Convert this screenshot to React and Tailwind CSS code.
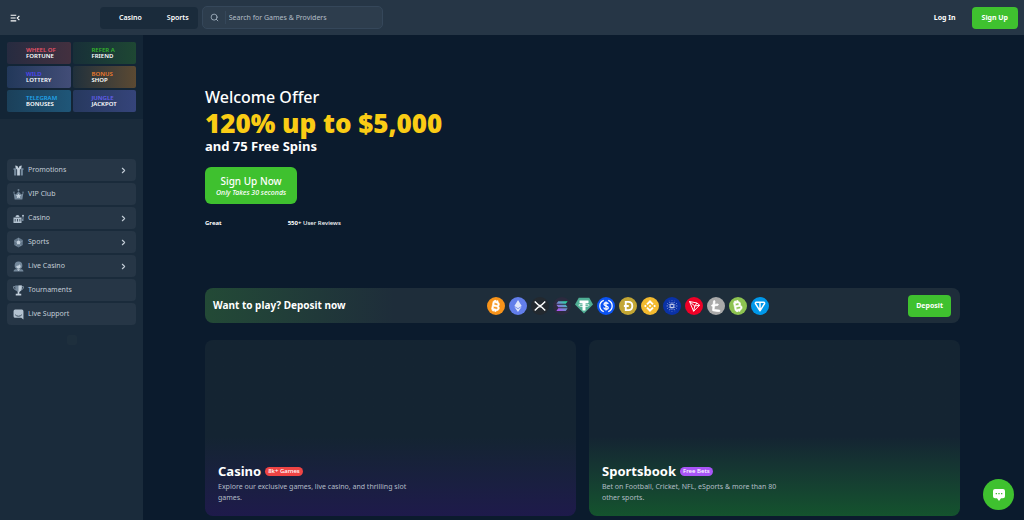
import { FaBitcoinSign, FaLitecoinSign } from 'react-icons/fa6'
import { SiBinance, SiCardano, SiEthereum } from 'react-icons/si'
import { ChevronRight, Search } from 'lucide-react'

const promos = [
  { top: 'WHEEL OF', bottom: 'FORTUNE', color: 'text-[#ee5468]', bg: 'from-[#262b40] to-[#43303f]' },
  { top: 'REFER A', bottom: 'FRIEND', color: 'text-[#35b52c]', bg: 'from-[#182f38] to-[#1e4733]' },
  { top: 'WILD', bottom: 'LOTTERY', color: 'text-[#4f46f5]', bg: 'from-[#22385a] to-[#424d77]' },
  { top: 'BONUS', bottom: 'SHOP', color: 'text-[#ee7b2c]', bg: 'from-[#20303b] to-[#5b4932]' },
  { top: 'TELEGRAM', bottom: 'BONUSES', color: 'text-[#21a5ea]', bg: 'from-[#1b405a] to-[#1f5678]' },
  { top: 'JUNGLE', bottom: 'JACKPOT', color: 'text-[#6660f0]', bg: 'from-[#27395f] to-[#35447a]' }
]

const menu = [
  { label: 'Promotions', icon: GiftIcon, expandable: true },
  { label: 'VIP Club', icon: CrownIcon },
  { label: 'Casino', icon: SlotIcon, expandable: true },
  { label: 'Sports', icon: BallIcon, expandable: true },
  { label: 'Live Casino', icon: DealerIcon, expandable: true },
  { label: 'Tournaments', icon: TrophyIcon },
  { label: 'Live Support', icon: SupportIcon }
]

const coins = [
  { name: 'Bitcoin', bg: 'bg-[#f7931a]', icon: <FaBitcoinSign className="size-3 rotate-12 stroke-current stroke-[24]" /> },
  { name: 'Ethereum', bg: 'bg-[#627eea]', icon: <SiEthereum className="size-3 opacity-80" /> },
  { name: 'XRP', bg: 'bg-[#23292f]', icon: <XrpIcon /> },
  { name: 'Solana', bg: 'bg-[#2b2a3e]', icon: <SolanaIcon /> },
  { name: 'Tether', bg: '', icon: <TetherIcon /> },
  { name: 'USD Coin', bg: 'bg-[#0b53f4]', icon: <UsdcIcon /> },
  { name: 'Dogecoin', bg: 'bg-[#c3a634]', icon: <DogeIcon /> },
  { name: 'BNB', bg: 'bg-[#f3ba2f]', icon: <SiBinance className="size-3" /> },
  { name: 'Cardano', bg: 'bg-[#0a32a8]', icon: <SiCardano className="size-3" /> },
  { name: 'Tron', bg: 'bg-[#ef0027]', icon: <TronIcon /> },
  { name: 'Litecoin', bg: 'bg-[#a9a9a9]', icon: <FaLitecoinSign className="size-3 rotate-6 stroke-current stroke-[32]" /> },
  { name: 'Bitcoin Cash', bg: 'bg-[#8dc351]', icon: <FaBitcoinSign className="size-3 -rotate-12 stroke-current stroke-[24]" /> },
  { name: 'Toncoin', bg: 'bg-[#0098ea]', icon: <TonIcon /> }
]

const games = [
  {
    title: 'Casino',
    badge: '8k+ Games',
    badgeBg: 'bg-[#ef4444]',
    text: 'Explore our exclusive games, live casino, and thrilling slot games.',
    bg: 'from-[#142432] via-[#142432] to-[#1e1a4b]'
  },
  {
    title: 'Sportsbook',
    badge: 'Free Bets',
    badgeBg: 'bg-[#a855f7]',
    text: 'Bet on Football, Cricket, NFL, eSports & more than 80 other sports.',
    bg: 'from-[#142432] via-[#142432] to-[#14532d]'
  }
]

function MenuIcon() {
  return (
    <svg viewBox="0 0 16 12" className="h-2 w-2.5" fill="none" stroke="currentColor" strokeWidth="1.8">
      <path d="M1 1.5h9M1 6h8M1 10.5h9M15 2.5 11.5 6 15 9.5" />
    </svg>
  )
}

function GiftIcon() {
  return (
    <svg viewBox="0 0 20 20" className="size-[11px]" fill="#74889b">
      <path d="M1 6h5v13H3a1 1 0 0 1-1-1V9H1zM14 6h5v3h-1v9a1 1 0 0 1-1 1h-3z" />
      <path d="M7.5 8h5v11h-5zM4 1l4 1 2 4 2-4 4-1-1 5-3 3H8L5 6z" fill="#c3d0dc" />
    </svg>
  )
}

function CrownIcon() {
  return (
    <svg viewBox="0 0 20 20" className="size-[11px]" fill="#74889b">
      <path d="m1 7 4 3 5-6 5 6 4-3-2 12H3z" />
      <circle cx="10" cy="2" r="1.8" />
      <circle cx="1.8" cy="6" r="1.3" />
      <circle cx="18.2" cy="6" r="1.3" />
      <path d="m10 8 1.5 3 3.3.4-2.4 2.3.6 3.3-3-1.5L7 17l.6-3.3-2.4-2.3 3.3-.4z" fill="#c3d0dc" />
    </svg>
  )
}

function SlotIcon() {
  return (
    <svg viewBox="0 0 22 20" className="size-[11px]" fill="#b3c2d0">
      <path d="M5 7a4 4 0 0 1 8 0z" />
      <path d="M1 8h16v11H1zm2.5 3v5H5v-5zm4.7 0v5h1.6v-5zm4.8 0v5h1.5v-5z" fillRule="evenodd" />
      <path d="M18 11h1V6h2v9h-3z" fill="#74889b" />
      <circle cx="20" cy="4.5" r="2" />
    </svg>
  )
}

function BallIcon() {
  return (
    <svg viewBox="0 0 20 20" className="size-[11px]" fill="#64788b">
      <path d="m10 1 7.8 4.5v9L10 19l-7.8-4.5v-9z" />
      <path d="m10 6 3.8 2.8-1.4 4.4H7.6L6.2 8.8z" fill="#c3d0dc" />
      <path d="M10 6V2M14 9l3.5-1.5M12.5 13l2 3.5M7.5 13l-2 3.5M6 9 2.5 7.5" stroke="#91a3b4" />
    </svg>
  )
}

function DealerIcon() {
  return (
    <svg viewBox="0 0 20 20" className="size-[11px]" fill="#74889b">
      <path d="M3 8a7 7 0 0 1 14 0c0 3-1 5-3 6H6c-2-1-3-3-3-6M1 19c0-3 2-4 5-4h8c3 0 5 1 5 4z" />
      <path d="M6 9c3 0 5-1 6-3l2 3c0 3-2 5-4 5s-4-2-4-5M7 15l3 3 3-3z" fill="#c3d0dc" />
    </svg>
  )
}

function TrophyIcon() {
  return (
    <svg viewBox="0 0 20 20" className="size-[11px]" fill="#c3d0dc">
      <path d="M4 1h12v4c0 4-2 7-6 8-4-1-6-4-6-8z" fill="#74889b" />
      <path d="M10 1h6v4c0 4-2 7-6 8zM8.5 12h3v4h-3zM5 16h10v3H5z" />
      <path d="M4 3H1c0 4 2 6 5 6M16 3h3c0 4-2 6-5 6" fill="none" stroke="#91a3b4" strokeWidth="1.5" />
    </svg>
  )
}

function SupportIcon() {
  return (
    <svg viewBox="0 0 20 20" className="size-[11px]" fill="#b3c2d0">
      <path d="M4 1h12a3 3 0 0 1 3 3v15l-4-3H4a3 3 0 0 1-3-3V4a3 3 0 0 1 3-3" />
      <path d="M4 10.5c3 3.5 9 3.5 12 0" fill="none" stroke="#3a4c5d" strokeWidth="1.8" />
    </svg>
  )
}

function XrpIcon() {
  return (
    <svg viewBox="0 0 24 24" className="size-4.5" fill="none" stroke="white" strokeWidth="2">
      <path d="m5 6 4.5 4.3a3.7 3.7 0 0 0 5 0L19 6M5 18l4.5-4.3a3.7 3.7 0 0 1 5 0L19 18" />
    </svg>
  )
}

function SolanaIcon() {
  return (
    <svg viewBox="0 0 24 24" className="size-4.5">
      <defs>
        <linearGradient id="solana" x1="19" y1="5" x2="6" y2="19" gradientUnits="userSpaceOnUse">
          <stop stopColor="#14f195" />
          <stop offset=".5" stopColor="#6f8fd0" />
          <stop offset="1" stopColor="#b54bf5" />
        </linearGradient>
      </defs>
      <path d="M7 5.5h12.500L17 9H4.500zM4.500 10.300H17l2.500 3.500H7zM7 15h12.500L17 18.500H4.500z" fill="url(#solana)" />
    </svg>
  )
}

function TetherIcon() {
  return (
    <svg viewBox="0 0 24 24" className="size-4.5">
      <path d="M5 1h14l5 9-12 12L0 10z" fill="#50af95" />
      <path d="M6 4.5h12V8h-4v10h-4V8H6z" fill="white" />
      <ellipse cx="12" cy="11" rx="7" ry="1.8" fill="none" stroke="white" />
    </svg>
  )
}

function UsdcIcon() {
  return (
    <svg viewBox="0 0 24 24" className="size-4.5" fill="none" stroke="white" strokeWidth="1.7">
      <path d="M9 4.5a8 8 0 0 0 0 15M15 4.5a8 8 0 0 1 0 15M15 9.5C14.5 7 9.3 7 9.3 9.8c0 2.7 5.700 1.500 5.700 4.400 0 3-5.700 2.800-6-.2M12 6v12" />
    </svg>
  )
}

function DogeIcon() {
  return (
    <svg viewBox="0 0 24 24" className="size-4.5" fill="none" stroke="white" strokeWidth="2.5">
      <path d="M9 6.5h3.5c7 0 7 11 0 11H9zM6.5 12H13" />
    </svg>
  )
}

function TronIcon() {
  return (
    <svg viewBox="0 0 24 24" className="size-4.5" fill="none" stroke="white" strokeWidth="1.3" strokeLinejoin="round">
      <path d="m6 6 10 2 3.5 3-8 8zM6 6l7 6-1.5 7M13 12l3-4M13 12l6.5-1" />
    </svg>
  )
}

function TonIcon() {
  return (
    <svg viewBox="0 0 24 24" className="size-4.5" fill="none" stroke="white" strokeWidth="1.9" strokeLinejoin="round">
      <path d="M7 7h10c1 0 1.500 1 1 2l-6 9.500L6 9c-.5-1 0-2 1-2M12 7v11" />
    </svg>
  )
}

function Header() {
  return (
    <header className="flex h-[35px] shrink-0 items-center bg-[#263646] pr-1.5 pl-2.5 text-[7px] text-white">
      <div className="w-[90px]">
        <button type="button" aria-label="Toggle menu" className="flex">
          <MenuIcon />
        </button>
      </div>
      <nav className="flex h-[22px] items-center gap-[25px] rounded-[4px] bg-[#1a2b3b] pt-0.5 pr-[9px] pl-[19px] font-semibold">
        <a href="#casino">Casino</a>
        <a href="#sports">Sports</a>
      </nav>
      <label className="ml-1 flex h-[23px] w-[181px] items-center rounded-[5px] border border-[#35475a] bg-[#2d3d4d] pl-[7px]">
        <Search className="size-[9px] text-[#b3c2d0]" />
        <input
          type="text"
          aria-label="Search"
          placeholder="Search for Games & Providers"
          className="ml-1.5 min-w-0 flex-1 border-l border-[#35475a] pt-0.5 pl-[3px] outline-none placeholder:text-[#b3bdc7]"
        />
      </label>
      <div className="ml-auto flex items-center gap-4 font-bold">
        <button type="button" className="h-[22px] pt-0.5">
          Log In
        </button>
        <button type="button" className="h-[22px] rounded-[4px] bg-[#3fc12f] px-2.5 pt-0.5">
          Sign Up
        </button>
      </div>
    </header>
  )
}

function Sidebar() {
  return (
    <aside className="w-[143px] shrink-0 bg-[#1a2b3b]">
      <div className="grid grid-cols-2 gap-0.5 bg-[#132536] p-[7px]">
        {promos.map((promo) => (
          <a
            key={promo.bottom}
            href="#promo"
            className={`flex h-[22px] flex-col justify-center rounded-[2px] bg-gradient-to-r pl-[19px] text-[6px] leading-[6px] font-semibold text-white ${promo.bg}`}
          >
            <span className={promo.color}>{promo.top}</span>
            <span>{promo.bottom}</span>
          </a>
        ))}
      </div>
      <nav className="mt-10 flex flex-col gap-0.5 px-[7px]">
        {menu.map(({ label, icon: Icon, expandable }) => (
          <a
            key={label}
            href="#menu"
            className="flex h-[22px] items-center gap-1 rounded-[4px] bg-[#263646] pr-2 pl-1.5 text-[7px] text-[#c3cdd7]"
          >
            <Icon />
            {label}
            {expandable && <ChevronRight className="ml-auto size-[9px]" strokeWidth={3} />}
          </a>
        ))}
      </nav>
      <div className="mx-auto mt-2.5 size-2.5 rounded-[2px] bg-[#1e2f3d]" />
    </aside>
  )
}

function Hero() {
  return (
    <section className="pt-[50px] text-white">
      <h1>
        <span className="block text-base leading-6 font-medium">Welcome Offer</span>
        <span className="block font-['Open_Sans',sans-serif] text-[26px] leading-7 font-extrabold text-[#facc15]">
          120% up to $5,000
        </span>
        <span className="block text-[13px] leading-[18px] font-bold">and 75 Free Spins</span>
      </h1>
      <button type="button" className="mt-3 flex h-[37px] flex-col items-center justify-center rounded-md bg-[#3fc12f] px-[11px]">
        <span className="text-[10px] leading-[14px] font-medium">Sign Up Now</span>
        <span className="text-[7px] leading-[10px] font-medium italic">Only Takes 30 seconds</span>
      </button>
      <div className="mt-3.5 flex gap-[66px] text-[6px] leading-[10px]">
        <span className="font-bold">Great</span>
        <span className="font-medium">
          <b>550+</b> User Reviews
        </span>
      </div>
    </section>
  )
}

function DepositBar() {
  return (
    <section className="mt-[60px] flex h-[35px] items-center rounded-lg bg-gradient-to-r from-[#234a36] via-[#1e2d3a] via-25% to-[#1e2d3a] pr-[9px] pl-2">
      <h2 className="w-[274px] text-[10px] font-bold text-white">Want to play? Deposit now</h2>
      <ul className="flex gap-1">
        {coins.map((coin) => (
          <li
            key={coin.name}
            aria-label={coin.name}
            className={`flex size-[18px] items-center justify-center rounded-full text-white ${coin.bg}`}
          >
            {coin.icon}
          </li>
        ))}
      </ul>
      <button type="button" className="ml-auto h-[22px] rounded-[4px] bg-[#3fc12f] px-2 pt-0.5 text-[7px] font-bold text-white">
        Deposit
      </button>
    </section>
  )
}

function GameCard({ game }) {
  return (
    <a href="#games" className={`flex h-[176px] flex-col justify-end rounded-lg bg-gradient-to-b via-55% p-[13px] ${game.bg}`}>
      <div className="flex items-center gap-1">
        <h3 className="text-[13px] leading-4 font-bold text-white">{game.title}</h3>
        <span className={`rounded-full px-[3px] text-[6px] leading-[9px] font-medium text-white ${game.badgeBg}`}>
          {game.badge}
        </span>
      </div>
      <p className="mt-0.5 w-48 text-[7px] leading-[11px] text-[#b3bdc7]">{game.text}</p>
    </a>
  )
}

function App() {
  return (
    <div className="flex h-screen flex-col overflow-hidden bg-[#0b1b2d] font-['Noto_Sans',sans-serif]">
      <Header />
      <div className="flex min-h-0 flex-1">
        <Sidebar />
        <main className="min-w-0 flex-1 pr-16 pl-[62px]">
          <Hero />
          <DepositBar />
          <div className="mt-[17px] grid grid-cols-2 gap-[13px]">
            {games.map((game) => (
              <GameCard key={game.title} game={game} />
            ))}
          </div>
        </main>
      </div>
      <button
        type="button"
        aria-label="Open chat"
        className="fixed right-2.5 bottom-2.5 flex size-[31px] items-center justify-center rounded-full bg-[#3fc12f]"
      >
        <svg viewBox="0 0 24 24" className="size-4">
          <path d="M6 3h12a3 3 0 0 1 3 3v8a3 3 0 0 1-3 3h-3l-3 4-3-4H6a3 3 0 0 1-3-3V6a3 3 0 0 1 3-3" fill="white" />
          <path d="M7 10h2m2 0h2m2 0h2" stroke="#3fc12f" strokeWidth="2" />
        </svg>
      </button>
    </div>
  )
}

export default App
